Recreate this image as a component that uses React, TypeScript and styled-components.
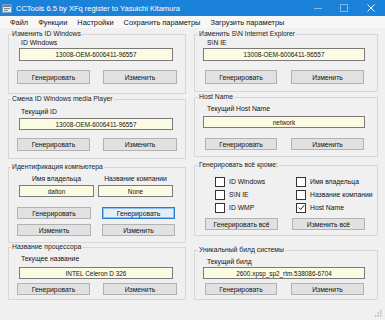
import React from 'react'
import styled, { createGlobalStyle } from 'styled-components'

const Global = createGlobalStyle`
	html, body {
		margin: 0;
		background: #f0f0f0;
	}
	body {
		font-family: 'Liberation Sans', Arial, sans-serif;
		color: #111;
	}
`

const Window = styled.div`
	width: 385px;
	height: 320px;
	overflow: hidden;
	display: flex;
	flex-direction: column;
	background: #f0f0f0;
`

const TitleBar = styled.div`
	height: 16px;
	flex: none;
	background: #1a82d8;
	display: flex;
	align-items: center;
	color: #fff;
	font-size: 7.5px;
	padding-left: 2px;
`

const Title = styled.span`
	margin-left: 4px;
	flex: 1;
	white-space: nowrap;
`

const Ctrl = styled.span<{ $w: number; $strong?: boolean }>`
	width: ${(p) => p.$w}px;
	height: 16px;
	display: flex;
	align-items: center;
	justify-content: center;
	opacity: ${(p) => (p.$strong ? 1 : 0.45)};
`

const MenuBar = styled.div`
	height: 12px;
	flex: none;
	background: #f7f7f7;
	display: flex;
	align-items: center;
	padding-left: 10px;
	gap: 10px;
	font-size: 7.4px;
`

const Columns = styled.div`
	display: grid;
	grid-template-columns: 178px 184px;
	column-gap: 8px;
	padding-left: 8px;
`

const Column = styled.div`
	display: flex;
	flex-direction: column;
`

const Group = styled.fieldset<{ $h: number; $mt: number }>`
	margin: ${(p) => p.$mt}px 0 0;
	padding: 0;
	height: ${(p) => p.$h}px;
	box-sizing: border-box;
	border: 1px solid #d7d7d7;
	min-width: 0;
`

const Legend = styled.legend<{ $ml: number }>`
	margin-left: ${(p) => p.$ml}px;
	padding: 0 1px;
	font-size: 6.8px;
	line-height: 8px;
	color: #1a1a1a;
`

const Sub = styled.div<{ $mt: number; $ml?: number; $w?: number; $center?: boolean }>`
	margin-top: ${(p) => p.$mt}px;
	margin-left: ${(p) => p.$ml ?? 12}px;
	width: ${(p) => (p.$w ? `${p.$w}px` : 'auto')};
	text-align: ${(p) => (p.$center ? 'center' : 'left')};
	font-size: 6.8px;
	line-height: 8px;
	white-space: nowrap;
`

const Row = styled.div<{ $mt: number; $ml: number; $gap: number }>`
	display: flex;
	margin-top: ${(p) => p.$mt}px;
	margin-left: ${(p) => p.$ml}px;
	gap: ${(p) => p.$gap}px;
`

const Field = styled.div<{ $mt?: number; $ml?: number; $w: number; $h?: number }>`
	margin-top: ${(p) => p.$mt ?? 0}px;
	margin-left: ${(p) => p.$ml ?? 0}px;
	width: ${(p) => p.$w}px;
	height: ${(p) => p.$h ?? 12}px;
	box-sizing: border-box;
	border: 1px solid #7a7a7a;
	background: #fbfbe3;
	font-size: 6.4px;
	display: flex;
	align-items: center;
	justify-content: center;
	white-space: nowrap;
`

const Btn = styled.div<{ $w: number; $h?: number; $focus?: boolean }>`
	width: ${(p) => p.$w}px;
	height: ${(p) => p.$h ?? 12}px;
	box-sizing: border-box;
	border: 1px solid ${(p) => (p.$focus ? '#2a7ccc' : '#b2b2b2')};
	box-shadow: ${(p) => (p.$focus ? 'inset 0 0 0 1px #8fc0ec' : 'none')};
	background: ${(p) => (p.$focus ? '#e3eef8' : '#e1e1e1')};
	font-size: 6.8px;
	display: flex;
	align-items: center;
	justify-content: center;
	white-space: nowrap;
`

const Checks = styled.div`
	display: grid;
	grid-template-columns: 81px 80px;
	grid-auto-rows: 13px;
	margin: 6px 0 0 20px;
`

const Check = styled.label`
	display: flex;
	align-items: center;
	gap: 4px;
	font-size: 6.8px;
	white-space: nowrap;
`

const Box = styled.span`
	width: 8px;
	height: 8px;
	border: 1px solid #333;
	background: #fff;
	display: flex;
	align-items: center;
	justify-content: center;
`

const Footer = styled.div`
	flex: 1;
	display: flex;
	justify-content: flex-end;
	align-items: flex-end;
	padding: 0 3px 3px 0;
`

function Checkbox({ label, checked }: { label: string; checked?: boolean }) {
	return (
		<Check>
			<Box>
				{checked && (
					<svg width="7" height="7" viewBox="0 0 7 7">
						<path d="M0.8 3.6 L2.7 5.5 L6.2 1.2" stroke="#222" strokeWidth="1" fill="none" />
					</svg>
				)}
			</Box>
			{label}
		</Check>
	)
}

export default function App() {
	return (
		<>
			<Global />
			<Window>
				<TitleBar>
					<svg width="10" height="9" viewBox="0 0 10 9">
						<rect x="0.5" y="0.5" width="9" height="8" fill="#dfe6ee" stroke="#8a9bb0" />
						<rect x="1" y="1" width="8" height="2" fill="#5b86c4" />
						<rect x="2" y="4" width="6" height="1" fill="#7d8a99" />
						<rect x="2" y="6" width="4" height="1" fill="#7d8a99" />
					</svg>
					<Title>CCTools 6.5 by XFq register to Yasuichi Kitamura</Title>
					<Ctrl $w={26}>
						<svg width="8" height="8" viewBox="0 0 8 8">
							<path d="M0 4.5 H8" stroke="#fff" strokeWidth="1" />
						</svg>
					</Ctrl>
					<Ctrl $w={26}>
						<svg width="8" height="8" viewBox="0 0 8 8">
							<rect x="0.5" y="0.5" width="7" height="7" stroke="#fff" fill="none" />
						</svg>
					</Ctrl>
					<Ctrl $w={28} $strong>
						<svg width="8" height="8" viewBox="0 0 8 8">
							<path d="M0.5 0.5 L7.5 7.5 M7.5 0.5 L0.5 7.5" stroke="#fff" strokeWidth="1" />
						</svg>
					</Ctrl>
				</TitleBar>
				<MenuBar>
					<span>Файл</span>
					<span>Функции</span>
					<span>Настройки</span>
					<span>Сохранить параметры</span>
					<span>Загрузить параметры</span>
				</MenuBar>
				<Columns>
					<Column>
						<Group $h={64} $mt={2}>
							<Legend $ml={2}>Изменить ID Windows</Legend>
							<Sub $mt={1}>ID Windows</Sub>
							<Field $mt={1} $ml={10} $w={154} $h={13}>
								13008-OEM-6006411-96557
							</Field>
							<Row $mt={9} $ml={8} $gap={13}>
								<Btn $w={73} $h={14}>Генерировать</Btn>
								<Btn $w={74} $h={14}>Изменить</Btn>
							</Row>
						</Group>
						<Group $h={64} $mt={1}>
							<Legend $ml={2}>Смена ID Windows media Player</Legend>
							<Sub $mt={5}>Текущий ID</Sub>
							<Field $mt={2} $ml={10} $w={154}>
								13008-OEM-6006411-96557
							</Field>
							<Row $mt={8} $ml={8} $gap={13}>
								<Btn $w={73} $h={13}>Генерировать</Btn>
								<Btn $w={74} $h={13}>Изменить</Btn>
							</Row>
						</Group>
						<Group $h={80} $mt={4}>
							<Legend $ml={2}>Идентификация компьютера</Legend>
							<Row $mt={4} $ml={10} $gap={4}>
								<Sub $mt={0} $ml={0} $w={75} $center>
									Имя владельца
								</Sub>
								<Sub $mt={0} $ml={0} $w={75} $center>
									Название компании
								</Sub>
							</Row>
							<Row $mt={2} $ml={10} $gap={4}>
								<Field $w={75}>dalton</Field>
								<Field $w={75}>None</Field>
							</Row>
							<Row $mt={10} $ml={8} $gap={11}>
								<Btn $w={74}>Генерировать</Btn>
								<Btn $w={73} $focus>
									Генерировать
								</Btn>
							</Row>
							<Row $mt={5} $ml={8} $gap={11}>
								<Btn $w={74}>Изменить</Btn>
								<Btn $w={73}>Изменить</Btn>
							</Row>
						</Group>
						<Group $h={57} $mt={0}>
							<Legend $ml={2}>Название процессора</Legend>
							<Sub $mt={4}>Текущее название</Sub>
							<Field $mt={4} $ml={10} $w={154}>
								INTEL Celeron D 326
							</Field>
							<Row $mt={4} $ml={8} $gap={13}>
								<Btn $w={73}>Генерировать</Btn>
								<Btn $w={74}>Изменить</Btn>
							</Row>
						</Group>
					</Column>
					<Column>
						<Group $h={62} $mt={2}>
							<Legend $ml={3}>Изменить S\N Internet Explorer</Legend>
							<Sub $mt={1}>S\N IE</Sub>
							<Field $mt={1} $ml={8} $w={162} $h={13}>
								13008-OEM-6006411-96557
							</Field>
							<Row $mt={9} $ml={10} $gap={14}>
								<Btn $w={72} $h={14}>Генерировать</Btn>
								<Btn $w={73} $h={14}>Изменить</Btn>
							</Row>
						</Group>
						<Group $h={64} $mt={1}>
							<Legend $ml={3}>Host Name</Legend>
							<Sub $mt={4}>Текущий Host Name</Sub>
							<Field $mt={3} $ml={8} $w={162}>
								network
							</Field>
							<Row $mt={10} $ml={10} $gap={14}>
								<Btn $w={72}>Генерировать</Btn>
								<Btn $w={73}>Изменить</Btn>
							</Row>
						</Group>
						<Group $h={75} $mt={4}>
							<Legend $ml={3}>Генерировать всё кроме:</Legend>
							<Checks>
								<Checkbox label="ID Windows" />
								<Checkbox label="Имя владельца" />
								<Checkbox label="S\N IE" />
								<Checkbox label="Название компании" />
								<Checkbox label="ID WMP" />
								<Checkbox label="Host Name" checked />
							</Checks>
							<Row $mt={4} $ml={10} $gap={14}>
								<Btn $w={73}>Генерировать всё</Btn>
								<Btn $w={73}>Изменить всё</Btn>
							</Row>
						</Group>
						<Group $h={54} $mt={10}>
							<Legend $ml={3}>Уникальный билд системы</Legend>
							<Sub $mt={4}>Текущий билд</Sub>
							<Field $mt={1} $ml={8} $w={162}>
								2600.xpsp_sp2_rtm.538086-6704
							</Field>
							<Row $mt={4} $ml={10} $gap={14}>
								<Btn $w={72}>Генерировать</Btn>
								<Btn $w={73}>Изменить</Btn>
							</Row>
						</Group>
					</Column>
				</Columns>
				<Footer>
					<svg width="7" height="7" viewBox="0 0 7 7">
						<rect x="5" y="0" width="1.5" height="1.5" fill="#b5b5b5" />
						<rect x="2.5" y="2.5" width="1.5" height="1.5" fill="#b5b5b5" />
						<rect x="5" y="2.5" width="1.5" height="1.5" fill="#b5b5b5" />
						<rect x="0" y="5" width="1.5" height="1.5" fill="#b5b5b5" />
						<rect x="2.5" y="5" width="1.5" height="1.5" fill="#b5b5b5" />
						<rect x="5" y="5" width="1.5" height="1.5" fill="#b5b5b5" />
					</svg>
				</Footer>
			</Window>
		</>
	)
}
